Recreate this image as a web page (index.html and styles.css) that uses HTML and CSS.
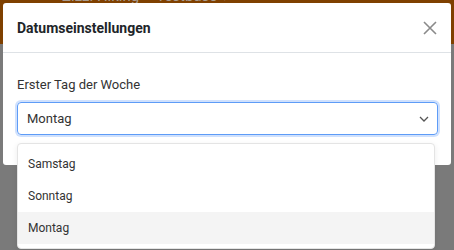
FILE: index.html
```html
<!DOCTYPE html>
<html lang="de">
<head>
<meta charset="utf-8">
<link rel="stylesheet" href="styles.css">
</head>
<body>
<div class="page">
  <div class="topbar"><span class="brand">Zizzi Hiking – Testbase ▾</span></div>
  <div class="modal">
    <div class="modal-header">
      <h5 class="modal-title">Datumseinstellungen</h5>
      <svg class="close" width="14" height="14" viewBox="0 0 14 14"><path d="M1 1L13 13M13 1L1 13" stroke="#8a8a8a" stroke-width="1.6" fill="none"/></svg>
    </div>
    <div class="modal-body">
      <label class="label">Erster Tag der Woche</label>
      <div class="select">
        <span>Montag</span>
        <svg width="10" height="6" viewBox="0 0 10 6"><path d="M1 1L5 5L9 1" stroke="#555" stroke-width="1.3" fill="none"/></svg>
      </div>
    </div>
  </div>
  <ul class="menu">
    <li class="item">Samstag</li>
    <li class="item">Sonntag</li>
    <li class="item active">Montag</li>
  </ul>
</div>
</body>
</html>
```
FILE: styles.css
```css
* { box-sizing: border-box; }
html, body { margin: 0; padding: 0; }
body {
  width: 454px;
  height: 250px;
  overflow: hidden;
  font-family: Roboto, "Liberation Sans", sans-serif;
  background: #7a7a7a;
}
.page {
  position: relative;
  display: flex;
  flex-direction: column;
  width: 454px;
  height: 250px;
  padding: 0 3px;
  background: linear-gradient(#7f4000 0, #7f4000 44px, #7a7a7a 44px);
}
.topbar {
  flex: 0 0 3px;
  height: 3px;
  overflow: hidden;
  padding-left: 59px;
}
.brand {
  display: block;
  font-size: 15px;
  line-height: 15px;
  margin-top: -11px;
  color: #a89c90;
  white-space: nowrap;
}
.modal {
  background: #fff;
  border-radius: 3px;
  height: 162px;
  flex: 0 0 162px;
}
.modal-header {
  display: flex;
  align-items: center;
  justify-content: space-between;
  height: 50px;
  padding: 0 14px;
  border-bottom: 1px solid #dee2e6;
}
.modal-title {
  margin: 0;
  font-size: 14px;
  font-weight: 700;
  color: #212529;
}
.modal-body {
  padding: 24px 13px 0 14px;
}
.label {
  display: block;
  font-size: 13px;
  color: #333;
  margin-bottom: 10px;
}
.select {
  height: 33px;
  border: 1px solid #5e9cf7;
  border-radius: 4px;
  box-shadow: 0 0 0 2px rgba(120, 170, 250, 0.35);
  display: flex;
  align-items: center;
  justify-content: space-between;
  padding: 0 8px 0 9px;
  font-size: 13px;
  color: #333;
}
.menu {
  position: absolute;
  left: 17px;
  top: 143px;
  width: 418px;
  margin: 0;
  padding: 4px 0;
  list-style: none;
  background: #fff;
  border: 1px solid #e4e4e4;
  border-radius: 4px;
  box-shadow: 0 2px 6px rgba(0,0,0,0.08);
}
.item {
  height: 32px;
  line-height: 32px;
  padding-left: 10px;
  font-size: 12px;
  color: #333;
}
.item.active { background: #f4f4f4; }
```
